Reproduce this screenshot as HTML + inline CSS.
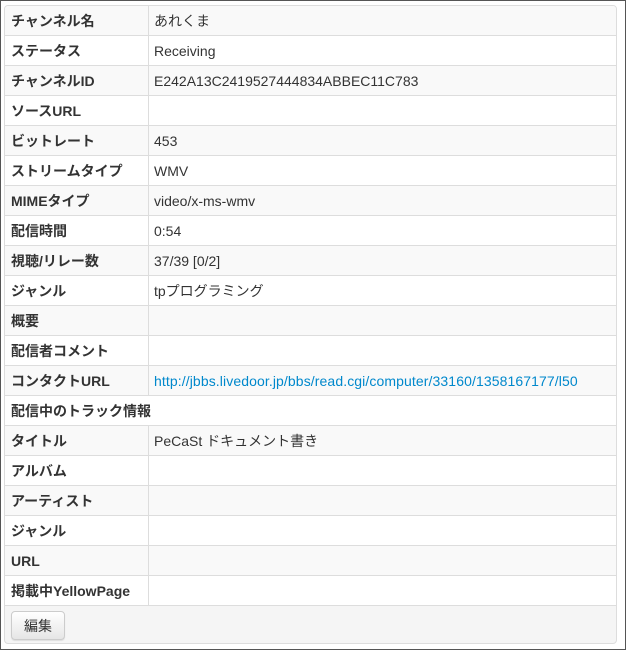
<!DOCTYPE html>
<html><head><meta charset="utf-8"><style>
html,body{margin:0;padding:0;}
body{width:624px;height:648px;border:1px solid #555;background:#fff;position:relative;font-family:"Liberation Sans","Noto Sans CJK JP",sans-serif;font-size:14px;color:#333;overflow:hidden;}
.panel{position:absolute;left:3px;top:4px;width:611px;height:637px;border:1px solid #ddd;border-radius:4px;background:#f5f5f5;overflow:hidden;}
table{border-collapse:collapse;width:611px;background:#fff;}
td{height:29px;border-bottom:1px solid #ddd;padding:0 0 0 5px;vertical-align:middle;line-height:20px;white-space:nowrap;}
td.k{width:137px;font-weight:bold;border-right:1px solid #ddd;padding-left:6px;}
tr:nth-child(odd) td{background:#f9f9f9;}
a{color:#0088cc;text-decoration:none;letter-spacing:0.1px;}
.btn{position:absolute;left:6px;top:605px;width:54px;height:29px;border:1px solid #ccc;border-radius:4px;background:linear-gradient(#fff,#e6e6e6);text-align:center;line-height:28px;font-size:14px;box-sizing:border-box;box-shadow:0 1px 1px rgba(0,0,0,.1);}
</style></head><body>
<div class="panel">
<table>
<tr><td class="k">チャンネル名</td><td>あれくま</td></tr>
<tr><td class="k">ステータス</td><td>Receiving</td></tr>
<tr><td class="k">チャンネルID</td><td>E242A13C2419527444834ABBEC11C783</td></tr>
<tr><td class="k">ソースURL</td><td></td></tr>
<tr><td class="k">ビットレート</td><td>453</td></tr>
<tr><td class="k">ストリームタイプ</td><td>WMV</td></tr>
<tr><td class="k">MIMEタイプ</td><td>video/x-ms-wmv</td></tr>
<tr><td class="k">配信時間</td><td>0:54</td></tr>
<tr><td class="k">視聴/リレー数</td><td>37/39 [0/2]</td></tr>
<tr><td class="k">ジャンル</td><td>tpプログラミング</td></tr>
<tr><td class="k">概要</td><td></td></tr>
<tr><td class="k">配信者コメント</td><td></td></tr>
<tr><td class="k">コンタクトURL</td><td><a>http://jbbs.livedoor.jp/bbs/read.cgi/computer/33160/1358167177/l50</a></td></tr>
<tr><td colspan="2" style="font-weight:bold;padding-left:6px">配信中のトラック情報</td></tr>
<tr><td class="k">タイトル</td><td>PeCaSt ドキュメント書き</td></tr>
<tr><td class="k">アルバム</td><td></td></tr>
<tr><td class="k">アーティスト</td><td></td></tr>
<tr><td class="k">ジャンル</td><td></td></tr>
<tr><td class="k">URL</td><td></td></tr>
<tr><td class="k">掲載中YellowPage</td><td></td></tr>
</table>
<div class="btn">編集</div>
</div>
</body></html>
